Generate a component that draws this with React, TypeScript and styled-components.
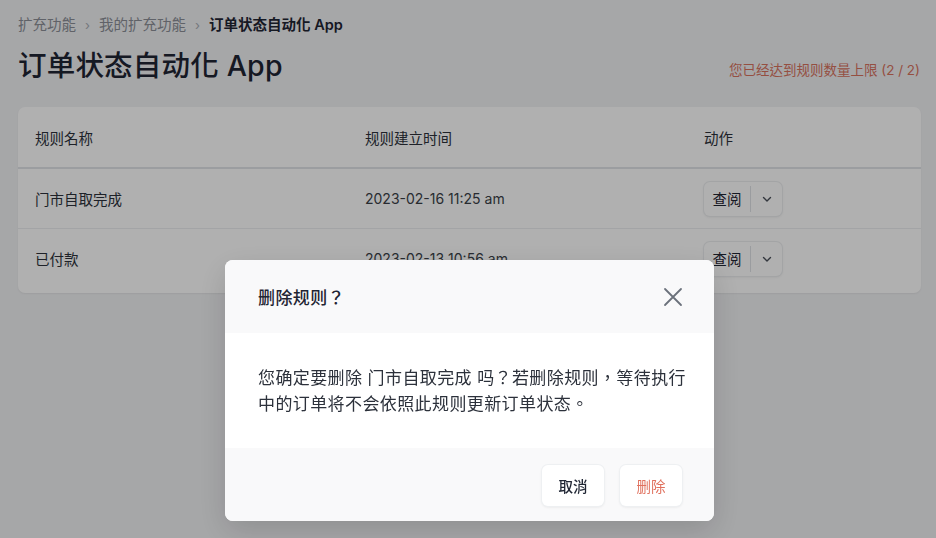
import * as React from 'react';
import styled, { createGlobalStyle } from 'styled-components';

const GlobalStyle = createGlobalStyle`
  html, body {
    margin: 0;
    padding: 0;
    background: #f1f2f4;
    font-family: Inter, "Noto Sans CJK TC", sans-serif;
    color: #1f2533;
  }
`;

const Page = styled.div`
  width: 936px;
  height: 538px;
  box-sizing: border-box;
  padding: 14px 15px 0 18px;
  overflow: hidden;
`;

const Breadcrumb = styled.nav`
  display: flex;
  align-items: center;
  gap: 9px;
  font-size: 14.5px;
  line-height: 22px;
  color: #8b8f97;
`;

const Crumb = styled.span<{ $current?: boolean }>`
  color: ${(p) => (p.$current ? '#1f2533' : '#8b8f97')};
  font-weight: ${(p) => (p.$current ? 600 : 400)};
`;

const Sep = styled.span`
  font-size: 13px;
  color: #a9adb4;
`;

const TitleRow = styled.div`
  display: flex;
  align-items: center;
  justify-content: space-between;
  margin-top: 6px;
  height: 42px;
`;

const Title = styled.h1`
  margin: 0;
  font-size: 28.5px;
  font-weight: 500;
  color: #1f2533;
  letter-spacing: 0.2px;
`;

const Limit = styled.span`
  font-size: 13.5px;
  color: #d8735f;
  margin-top: 12px;
  margin-right: 1px;
`;

const Card = styled.div`
  margin-top: 23px;
  width: 903px;
  padding-bottom: 5px;
  background: #ffffff;
  border-radius: 7px;
  box-shadow: 0 1px 2px rgba(0, 0, 0, 0.06);
  overflow: hidden;
`;

const Row = styled.div<{ $head?: boolean }>`
  display: grid;
  grid-template-columns: 330px 339px 1fr;
  align-items: center;
  box-sizing: border-box;
  padding-left: 17px;
  height: ${(p) => (p.$head ? '62px' : '60px')};
  border-bottom: ${(p) => (p.$head ? '2px solid #e1e4e8' : '1px solid #eceef1')};
  font-size: 14.5px;
  color: #2c313b;
  &:last-child {
    border-bottom: none;
    height: 59px;
  }
`;

const DateCell = styled.span`
  font-size: 14px;
  color: #3a3f48;
`;

const SplitButton = styled.div`
  display: inline-flex;
  align-items: stretch;
  height: 34px;
  width: 78px;
  background: #fff;
  border-radius: 6px;
  box-shadow: 0 0 0 1px #eceef0, 0 1px 3px rgba(0, 0, 0, 0.1);
`;

const SplitMain = styled.span`
  display: flex;
  align-items: center;
  justify-content: center;
  width: 46px;
  font-size: 14.5px;
  color: #1f2533;
  border-right: 1px solid #dfe2e6;
  margin: 4px 0;
`;

const SplitCaret = styled.span`
  flex: 1;
  display: flex;
  align-items: center;
  justify-content: center;
  color: #4a505a;
`;

const Overlay = styled.div`
  position: fixed;
  inset: 0;
  background: rgba(0, 0, 0, 0.31);
  display: flex;
  align-items: flex-end;
  justify-content: center;
  padding-bottom: 17px;
  padding-left: 3px;
`;

const Modal = styled.div`
  width: 489px;
  background: #fff;
  border-radius: 8px;
  overflow: hidden;
  box-shadow: 0 10px 30px rgba(0, 0, 0, 0.15);
`;

const ModalHeader = styled.div`
  display: flex;
  align-items: center;
  justify-content: space-between;
  height: 73px;
  padding: 0 31px 0 33px;
  background: #f9f9fa;
`;

const ModalTitle = styled.h2`
  margin: 0;
  font-size: 17px;
  letter-spacing: 0.4px;
  font-weight: 500;
  color: #1f2533;
`;

const CloseButton = styled.button`
  border: none;
  background: transparent;
  padding: 0;
  display: flex;
  color: #6b717b;
`;

const ModalBody = styled.div`
  padding: 32px 15px 32px 33px;
  font-size: 17px;
  letter-spacing: 0.4px;
  line-height: 26px;
  color: #2c313b;
  height: 115px;
  box-sizing: border-box;
  display: flex;
  align-items: center;
`;

const ModalFooter = styled.div`
  display: flex;
  justify-content: flex-end;
  align-items: flex-end;
  gap: 16px;
  height: 73px;
  box-sizing: border-box;
  padding: 0 32px 15px 0;
  background: #f9f9fa;
`;

const FooterButton = styled.button<{ $danger?: boolean }>`
  height: 41px;
  width: 62px;
  border: none;
  border-radius: 6px;
  background: #fff;
  box-shadow: 0 0 0 1px #eef0f2, 0 1px 3px rgba(0, 0, 0, 0.1);
  font-family: inherit;
  font-size: 14.5px;
  font-weight: ${(p) => (p.$danger ? 400 : 500)};
  color: ${(p) => (p.$danger ? '#e0705d' : '#1f2533')};
`;

const rules = [
  { name: '门市自取完成', created: '2023-02-16 11:25 am' },
  { name: '已付款', created: '2023-02-13 10:56 am' },
];

export default function App() {
  return (
    <>
      <GlobalStyle />
      <Page>
        <Breadcrumb>
          <Crumb>扩充功能</Crumb>
          <Sep>›</Sep>
          <Crumb>我的扩充功能</Crumb>
          <Sep>›</Sep>
          <Crumb $current>订单状态自动化 App</Crumb>
        </Breadcrumb>
        <TitleRow>
          <Title>订单状态自动化 App</Title>
          <Limit>您已经达到规则数量上限 (2 / 2)</Limit>
        </TitleRow>
        <Card>
          <Row $head>
            <span>规则名称</span>
            <span>规则建立时间</span>
            <span>动作</span>
          </Row>
          {rules.map((r) => (
            <Row key={r.name}>
              <span>{r.name}</span>
              <DateCell>{r.created}</DateCell>
              <span>
                <SplitButton>
                  <SplitMain>查阅</SplitMain>
                  <SplitCaret>
                    <svg width="12" height="12" viewBox="0 0 12 12" fill="none">
                      <path d="M2.5 4.5 6 8l3.5-3.5" stroke="currentColor" strokeWidth="1.4" strokeLinecap="round" strokeLinejoin="round" />
                    </svg>
                  </SplitCaret>
                </SplitButton>
              </span>
            </Row>
          ))}
        </Card>
      </Page>
      <Overlay>
        <Modal>
          <ModalHeader>
            <ModalTitle>删除规则？</ModalTitle>
            <CloseButton aria-label="关闭">
              <svg width="20" height="20" viewBox="0 0 20 20" fill="none">
                <path d="M2 2l16 16M18 2 2 18" stroke="currentColor" strokeWidth="1.8" strokeLinecap="round" />
              </svg>
            </CloseButton>
          </ModalHeader>
          <ModalBody>
            您确定要删除 门市自取完成 吗？若删除规则，等待执行中的订单将不会依照此规则更新订单状态。
          </ModalBody>
          <ModalFooter>
            <FooterButton>取消</FooterButton>
            <FooterButton $danger>删除</FooterButton>
          </ModalFooter>
        </Modal>
      </Overlay>
    </>
  );
}
